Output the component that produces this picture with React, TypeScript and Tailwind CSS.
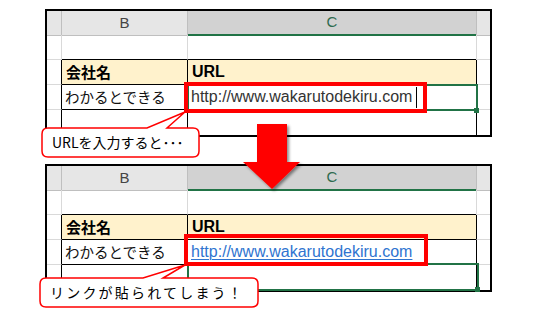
import React from "react";

const jp = "font-['Noto_Sans_CJK_JP','Noto_Sans',sans-serif]";
const lat = "font-['Liberation_Sans','Noto_Sans_CJK_JP',sans-serif]";

const GRID = "border-[#d9d9d9]";
const BLACK = "border-black";

function Sheet({ linked }: { linked: boolean }) {
  return (
    <div className="w-[447px] border-2 border-black bg-white">
      {/* header */}
      <div className="grid h-[24px] grid-cols-[15px_126px_288px_14px]">
        <div className="border-r border-b border-[#bfbfbf] bg-[#e6e6e6]" />
        <div className={`flex items-center justify-center border-r border-b border-[#bfbfbf] bg-[#e6e6e6] text-[15px] text-[#444] ${lat}`}>
          B
        </div>
        <div className={`flex items-center justify-center border-b-2 border-[#217346] bg-[#d2d2d2] text-[15px] text-[#2e6b4f] ${lat}`}>
          C
        </div>
        <div className="border-l border-b border-[#bfbfbf] bg-[#e6e6e6]" />
      </div>

      {/* row 1 */}
      <div className="grid h-[25px] grid-cols-[15px_126px_288px_14px]">
        <div className={`border-r border-b ${GRID}`} />
        <div className={`border-r ${GRID} border-b-black border-b`} />
        <div className={`border-b ${BLACK}`} />
        <div className={`border-l border-b ${GRID}`} />
      </div>

      {/* row 2: table header */}
      <div className="grid h-[25px] grid-cols-[15px_126px_288px_14px]">
        <div className={`border-r border-b ${GRID} border-r-black`} />
        <div className={`flex items-center border-r border-b ${BLACK} bg-[#fff2cc] pl-[4px] text-[15px] font-bold text-black ${jp}`}>
          会社名
        </div>
        <div className={`flex items-center border-b ${BLACK} bg-[#fff2cc] pl-[4px] text-[16px] font-bold text-black ${lat}`}>
          URL
        </div>
        <div className={`border-l border-b ${BLACK} border-b-[#d9d9d9]`} />
      </div>

      {/* row 3: data */}
      <div className="grid h-[25px] grid-cols-[15px_126px_288px_14px]">
        <div className={`border-r border-b ${GRID} border-r-black`} />
        <div className={`flex items-center border-r border-b ${BLACK} pl-[3px] text-[14.5px] text-[#111] ${jp}`}>
          わかるとできる
        </div>
        <div className={`flex items-center border-b ${BLACK} pl-[3px] ${lat} text-[16px]`}>
          {linked ? (
            <span className="text-[#2f74d0] underline decoration-1 underline-offset-[2px]">
              http://www.wakarutodekiru.com
            </span>
          ) : (
            <span className="text-[#333]">http://www.wakarutodekiru.com</span>
          )}
        </div>
        <div className={`border-l border-b ${BLACK} border-b-[#d9d9d9]`} />
      </div>

      {/* row 4 */}
      <div className="grid h-[25px] grid-cols-[15px_126px_288px_14px]">
        <div className={`border-r ${BLACK}`} />
        <div className={`border-r ${BLACK}`} />
        <div />
        <div className={`border-l ${BLACK}`} />
      </div>
    </div>
  );
}

export default function App() {
  return (
    <div className="relative h-[311px] w-[534px] overflow-hidden bg-white">
      <div className="flex flex-col gap-[27px] pl-[45px] pt-[9px]">
        <Sheet linked={false} />
        <Sheet linked={true} />
      </div>

      {/* selection + highlight, top sheet */}
      <div className="absolute left-[187px] top-[84px] h-[27px] w-[291px] border-2 border-[#217346]" />
      <div className="absolute left-[474px] top-[108px] h-[5px] w-[5px] bg-[#217346]" />
      <div className="absolute left-[184px] top-[82px] h-[31px] w-[243px] border-4 border-[#ff0000]" />
      <div className="absolute left-[416px] top-[87px] h-[21px] w-px bg-black" />

      {/* selection + highlight, bottom sheet */}
      <div className="absolute left-[187px] top-[263px] h-[28px] w-[292px] border-2 border-[#217346]" />
      <div className="absolute left-[475px] top-[287px] h-[5px] w-[5px] bg-[#217346]" />
      <div className="absolute left-[184px] top-[234px] h-[32px] w-[244px] border-4 border-[#ff0000]" />

      {/* arrow and callouts */}
      <svg className="pointer-events-none absolute left-0 top-0" width="534" height="311">
        <defs>
          <filter id="sh" x="-30%" y="-30%" width="160%" height="160%">
            <feDropShadow dx="2" dy="2" stdDeviation="1.6" floodColor="#000" floodOpacity="0.45" />
          </filter>
        </defs>
        <polygon
          points="257,124 287,124 287,162 300,162 272,189 243,162 257,162"
          fill="#ff0000"
          filter="url(#sh)"
        />
        <path
          d="M48 128 H147 L185 112 L167 128 H193 Q199 128 199 134 V151 Q199 157 193 157 H48 Q42 157 42 151 V134 Q42 128 48 128 Z"
          fill="#fff"
          stroke="#ff0000"
          strokeWidth="1.5"
        />
        <path
          d="M46 278 H143 L185 265 L163 278 H252 Q258 278 258 284 V301 Q258 307 252 307 H46 Q40 307 40 301 V284 Q40 278 46 278 Z"
          fill="#fff"
          stroke="#ff0000"
          strokeWidth="1.5"
        />
      </svg>

      <div className={`absolute left-[52px] top-[131px] text-[14px] leading-[22px] text-black ${jp}`}>
        URLを入力すると･･･
      </div>
      <div className={`absolute left-[50px] top-[281px] text-[14px] leading-[22px] tracking-[2.2px] text-black ${jp}`}>
        リンクが貼られてしまう！
      </div>
    </div>
  );
}
